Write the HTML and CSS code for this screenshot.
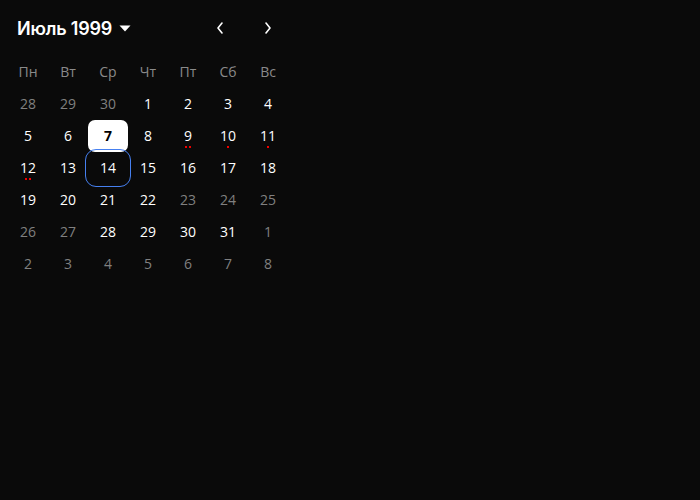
FILE: index.html
```html
<!DOCTYPE html>
<html lang="ru">
<head>
<meta charset="utf-8">
<link rel="stylesheet" href="styles.css">
</head>
<body>
<div class="calendar">
  <div class="header">
    <div class="title">Июль 1999 <svg class="caret" width="12" height="7" viewBox="0 0 12 7"><path d="M0.5 0.5h11L6 6.5z" fill="#fff"/></svg></div>
    <div class="nav">
      <button class="navbtn"><svg width="8" height="12" viewBox="0 0 8 12"><path d="M6 1L2 6l4 5" fill="none" stroke="#fff" stroke-width="1.6" stroke-linecap="round" stroke-linejoin="round"/></svg></button>
      <button class="navbtn"><svg width="8" height="12" viewBox="0 0 8 12"><path d="M2 1l4 5-4 5" fill="none" stroke="#fff" stroke-width="1.6" stroke-linecap="round" stroke-linejoin="round"/></svg></button>
    </div>
  </div>
  <div class="grid">
    <div class="wd">Пн</div><div class="wd">Вт</div><div class="wd">Ср</div><div class="wd">Чт</div><div class="wd">Пт</div><div class="wd">Сб</div><div class="wd">Вс</div>

    <div class="day muted">28</div><div class="day muted">29</div><div class="day muted">30</div><div class="day">1</div><div class="day">2</div><div class="day">3</div><div class="day">4</div>

    <div class="day">5</div><div class="day">6</div><div class="day selected">7</div><div class="day">8</div>
    <div class="day">9<span class="dots"><i></i><i></i></span></div>
    <div class="day">10<span class="dots"><i></i></span></div>
    <div class="day">11<span class="dots"><i></i></span></div>

    <div class="day">12<span class="dots"><i></i><i></i></span></div>
    <div class="day">13</div><div class="day focused">14</div><div class="day">15</div><div class="day">16</div><div class="day">17</div><div class="day">18</div>

    <div class="day">19</div><div class="day">20</div><div class="day">21</div><div class="day">22</div><div class="day muted">23</div><div class="day muted">24</div><div class="day muted">25</div>

    <div class="day muted">26</div><div class="day muted">27</div><div class="day">28</div><div class="day">29</div><div class="day">30</div><div class="day">31</div><div class="day muted">1</div>

    <div class="day muted">2</div><div class="day muted">3</div><div class="day muted">4</div><div class="day muted">5</div><div class="day muted">6</div><div class="day muted">7</div><div class="day muted">8</div>
  </div>
</div>
</body>
</html>
```
FILE: styles.css
```css
html, body {
  margin: 0;
  padding: 0;
  background: #0a0a0a;
  height: 100%;
}
body {
  font-family: "Open Sans", "Noto Sans", sans-serif;
  color: #fff;
}
.calendar {
  width: 280px;
  padding: 8px;
}
.header {
  display: flex;
  align-items: center;
  justify-content: space-between;
  height: 40px;
}
.title {
  display: flex;
  align-items: center;
  gap: 7px;
  padding-left: 9px;
  font-family: Inter, sans-serif;
  font-weight: 600;
  font-size: 18px;
  letter-spacing: -0.2px;
  color: #fff;
}
.caret {
  display: block;
  margin-top: 1px;
}
.nav {
  display: flex;
  gap: 8px;
}
.navbtn {
  width: 40px;
  height: 40px;
  padding: 0;
  border: 0;
  background: transparent;
  display: flex;
  align-items: center;
  justify-content: center;
}
.grid {
  margin-top: 8px;
  display: grid;
  grid-template-columns: repeat(7, 40px);
  grid-auto-rows: 32px;
}
.wd {
  display: flex;
  align-items: center;
  justify-content: center;
  padding-bottom: 1px;
  font-size: 14px;
  color: #8a8a8a;
}
.day {
  position: relative;
  display: flex;
  align-items: center;
  justify-content: center;
  padding-bottom: 2px;
  font-size: 14px;
  color: #fff;
  border-radius: 7px;
}
.muted {
  color: #808080;
}
.selected {
  background: #fff;
  color: #000;
  font-weight: 700;
}
.focused {
  outline: 1px solid #4680f0;
  outline-offset: 2px;
  border-radius: 8px;
}
.dots {
  position: absolute;
  left: 0;
  right: 0;
  top: 26px;
  display: flex;
  justify-content: center;
  gap: 2px;
}
.dots i {
  display: block;
  width: 2px;
  height: 2px;
  background: #f00000;
}
```
